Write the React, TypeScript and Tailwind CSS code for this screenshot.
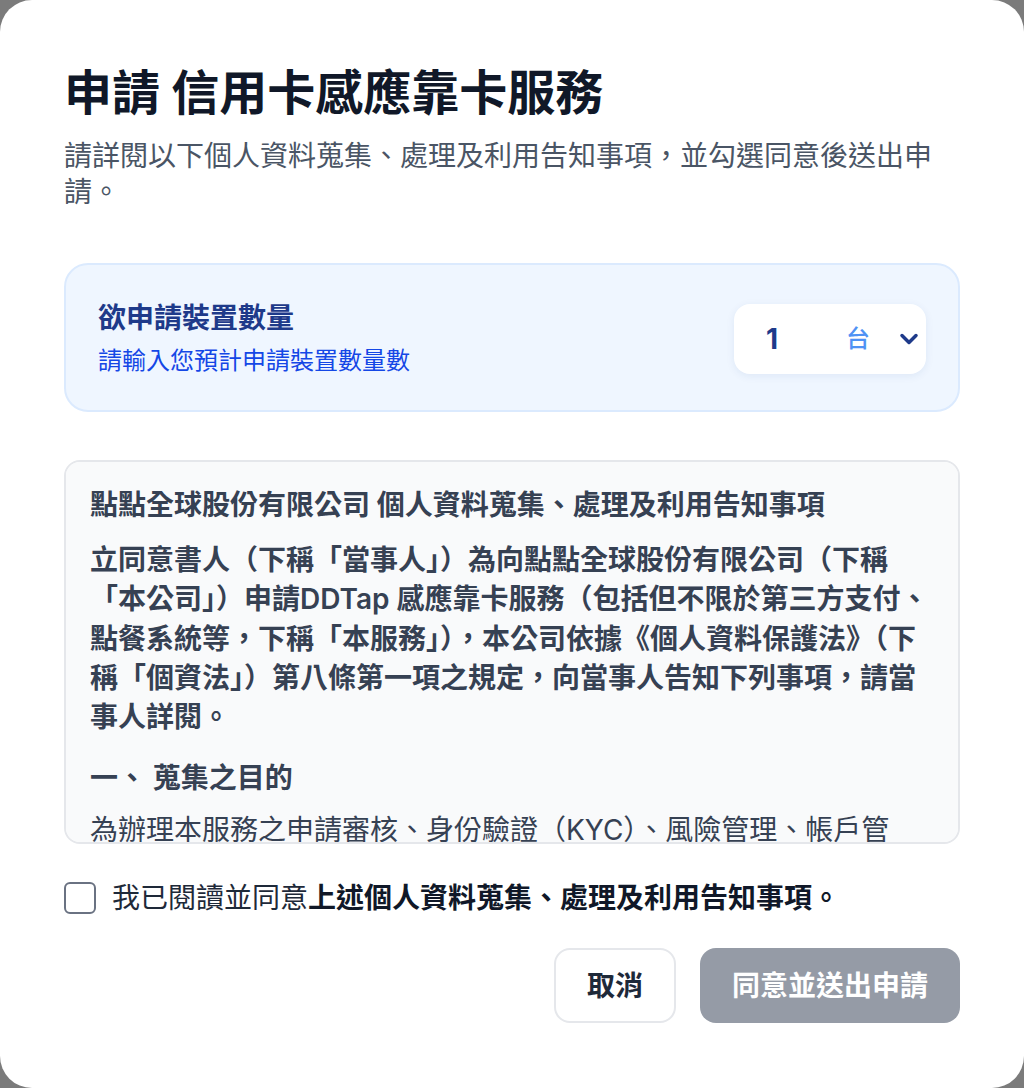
import React, { useState } from 'react';

const ChevronDown = () => (
  <svg width="28" height="28" viewBox="0 0 24 24" fill="none" stroke="currentColor" strokeWidth="3" strokeLinecap="round" strokeLinejoin="round">
    <path d="m6 9 6 6 6-6" />
  </svg>
);

const App: React.FC = () => {
  const [agreed, setAgreed] = useState(false);

  return (
    <div className="w-[1024px] h-[1088px] bg-[#7b7b7b] font-['Inter','Noto_Sans_CJK_TC',sans-serif]">
      <div className="w-full h-full bg-white rounded-[32px] px-16 pt-16 pb-16 flex flex-col">
        {/* Header */}
        <h1 className="text-[48px] leading-[58px] font-bold text-gray-900">申請 信用卡感應靠卡服務</h1>
        <p className="mt-4 text-[28px] leading-[36px] text-gray-600">
          請詳閱以下個人資料蒐集、處理及利用告知事項，並勾選同意後送出申請。
        </p>

        {/* Device count */}
        <div className="mt-[53px] flex items-center justify-between rounded-3xl border-2 border-blue-100 bg-blue-50 px-8 pt-[35px] pb-[33px]">
          <div>
            <div className="text-[28px] leading-[36px] font-bold text-[#1e3a8a]">欲申請裝置數量</div>
            <div className="mt-[9px] text-[24px] leading-[32px] text-blue-700">請輸入您預計申請裝置數量數</div>
          </div>
          <div className="flex h-[70px] w-[192px] items-center rounded-2xl bg-white pl-8 pr-[3px] shadow-[0_2px_8px_rgba(30,58,138,0.08)]">
            <span className="w-[80px] text-[28px] font-bold text-[#1e3a8a]">1</span>
            <span className="text-[24px] font-medium text-[#4f92f4]">台</span>
            <span className="ml-[25px] text-[#1e3a8a]">
              <ChevronDown />
            </span>
          </div>
        </div>

        {/* Notice */}
        <div className="mt-12 h-[384px] shrink-0 overflow-y-auto rounded-2xl border-2 border-gray-200 bg-gray-50 px-6 py-6 text-[28px] leading-[1.4] text-gray-700 [scrollbar-width:none]">
          <h2 className="font-bold">點點全球股份有限公司 個人資料蒐集、處理及利用告知事項</h2>
          <p className="mt-4 font-semibold">
            立同意書人（下稱「當事人」）為向點點全球股份有限公司（下稱「本公司」）申請DDTap 感應靠卡服務（包括但不限於第三方支付、點餐系統等，下稱「本服務」），本公司依據《個人資料保護法》（下稱「個資法」）第八條第一項之規定，向當事人告知下列事項，請當事人詳閱。
          </p>
          <h3 className="mt-[22px] font-bold">一、 蒐集之目的</h3>
          <p className="mt-[13px]">
            為辦理本服務之申請審核、身份驗證（KYC）、風險管理、帳戶管理、交易處理、客戶服務及相關法令遵循等目的。
          </p>
          <h3 className="mt-[22px] font-bold">二、 蒐集之個人資料類別</h3>
          <p className="mt-[13px]">
            姓名、身分證統一編號、聯絡方式、營業登記資料、金融帳戶資料及其他得以直接或間接識別個人之資料。
          </p>
        </div>

        {/* Agreement */}
        <label className="mt-9 flex items-center gap-4 cursor-pointer">
          <input
            type="checkbox"
            checked={agreed}
            onChange={() => setAgreed(!agreed)}
            className="h-8 w-8 appearance-none rounded-md border-2 border-gray-500 bg-white checked:bg-blue-600 checked:border-blue-600"
          />
          <span className="text-[28px] leading-[36px] text-gray-800">
            我已閱讀並同意<strong className="font-bold text-gray-900">上述個人資料蒐集、處理及利用告知事項。</strong>
          </span>
        </label>

        {/* Actions */}
        <div className="mt-8 flex justify-end gap-6">
          <button className="h-[75px] rounded-2xl border-2 border-gray-200 bg-white px-[31px] text-[28px] font-bold text-gray-800">
            取消
          </button>
          <button
            disabled={!agreed}
            className={agreed
              ? 'h-[75px] rounded-2xl bg-blue-600 px-8 text-[28px] font-bold text-white'
              : 'h-[75px] rounded-2xl bg-[#959ba6] px-8 text-[28px] font-bold text-white'}
          >
            同意並送出申請
          </button>
        </div>
      </div>
    </div>
  );
};

export default App;
